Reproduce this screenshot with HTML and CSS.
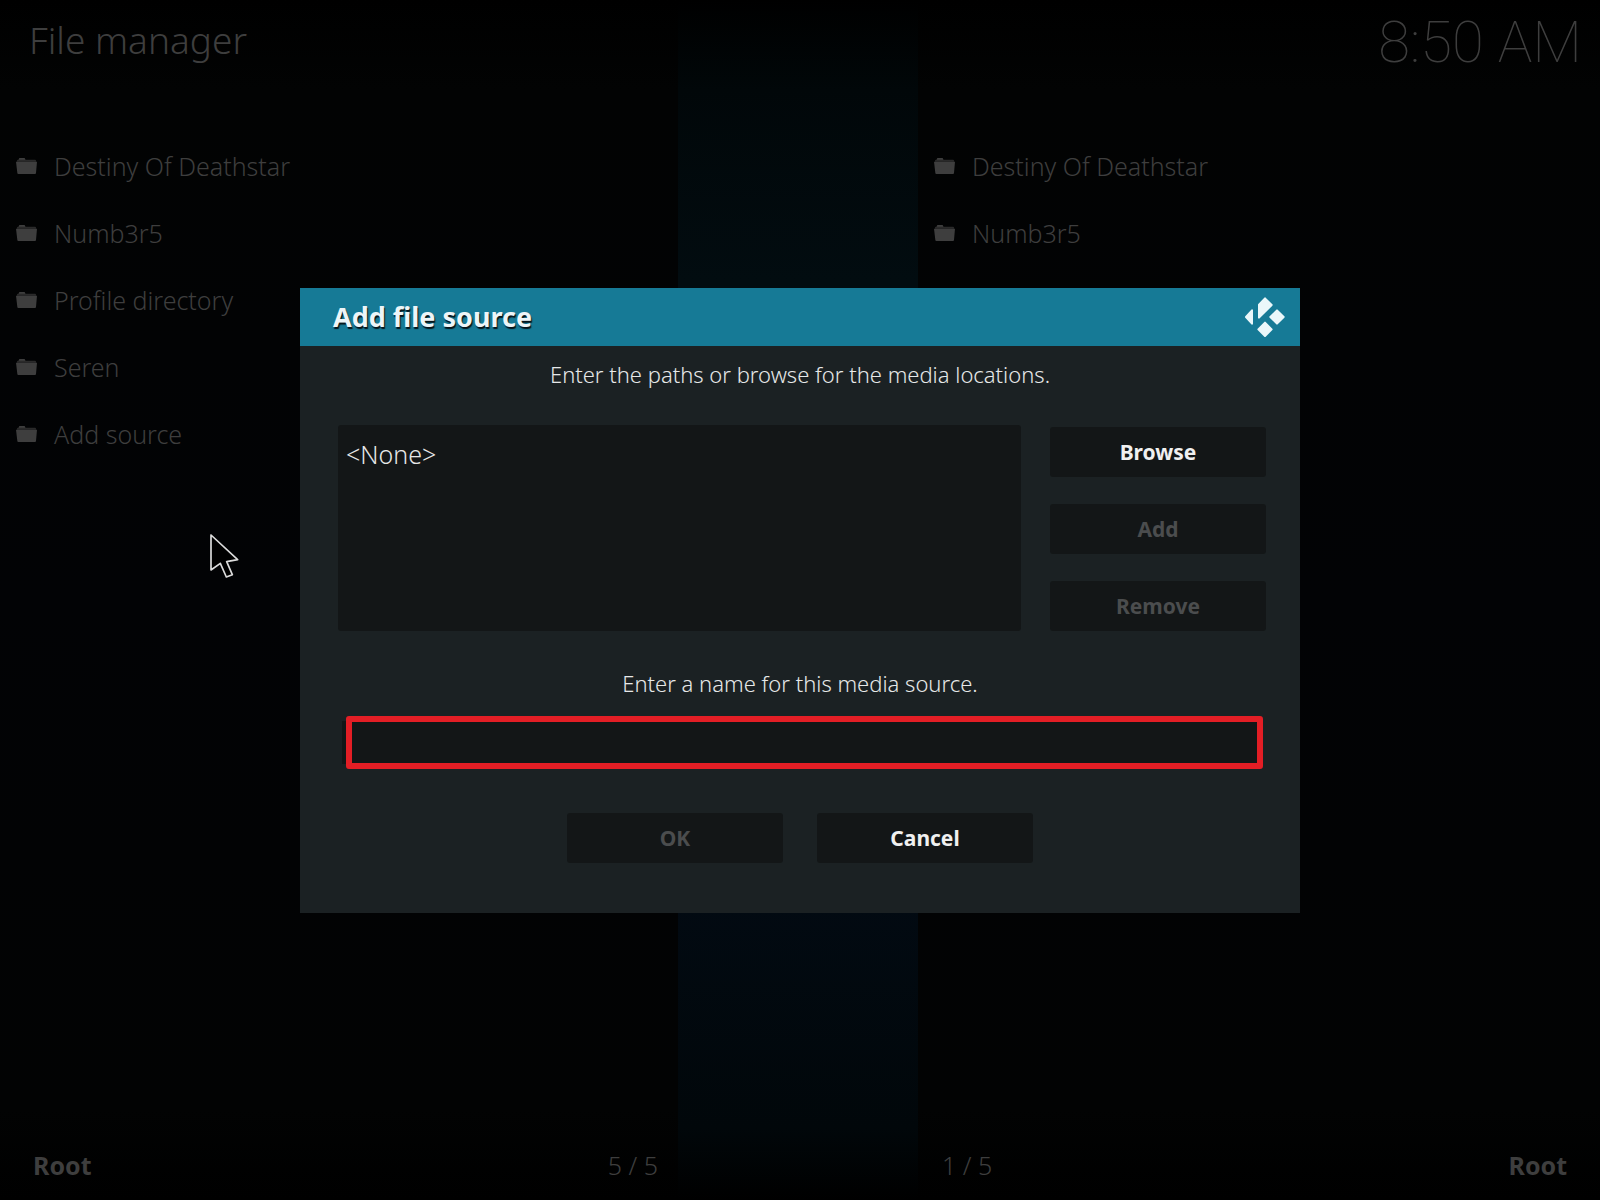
FILE: index.html
```html
<!DOCTYPE html>
<html lang="en">
<head>
<meta charset="UTF-8">
<meta name="viewport" content="width=device-width, initial-scale=1.0">
<title>File manager</title>
<link rel="stylesheet" href="styles.css">
</head>
<body>
<svg class="defs" width="0" height="0" aria-hidden="true">
    <symbol id="folder" viewBox="0 0 63 48">
        <path fill="#2a2a2a" d="M3 11V8q0-3 3-3h2q0-5 4-5h12q4 0 4 5h29q3 0 3 3v3z"/>
        <path fill="#3e3e3e" d="M8 5q0-5 4-5h12q4 0 4 5z"/>
        <path fill="#3e3e3e" d="M0 11h63l-3 34q0 3-3 3H7q-3 0-3-3z"/>
    </symbol>
</svg>

<div class="window">
    <header class="topbar">
        <h1>File manager</h1>
        <time class="clock">8:50 AM</time>
    </header>

    <div class="band"></div>

    <ul class="files files-left">
        <li><a href="#"><svg class="folder"><use href="#folder"/></svg>Destiny Of Deathstar</a></li>
        <li><a href="#"><svg class="folder"><use href="#folder"/></svg>Numb3r5</a></li>
        <li><a href="#"><svg class="folder"><use href="#folder"/></svg>Profile directory</a></li>
        <li><a href="#"><svg class="folder"><use href="#folder"/></svg>Seren</a></li>
        <li><a href="#"><svg class="folder"><use href="#folder"/></svg>Add source</a></li>
    </ul>
    <ul class="files files-right">
        <li><a href="#"><svg class="folder"><use href="#folder"/></svg>Destiny Of Deathstar</a></li>
        <li><a href="#"><svg class="folder"><use href="#folder"/></svg>Numb3r5</a></li>
    </ul>

    <div class="status status-left">
        <strong>Root</strong>
        <span>5 / 5</span>
    </div>
    <div class="status status-right">
        <span>1 / 5</span>
        <strong>Root</strong>
    </div>
</div>

<!-- Add file source dialog -->
<div class="overlay">
    <form class="dialog" role="dialog" aria-labelledby="dialogTitle">
        <div class="dialog-head">
            <h2 id="dialogTitle">Add file source</h2>
            <svg class="logo" viewBox="0 0 120 120" aria-hidden="true">
                <path d="M3 60L21 40V80z"/>
                <path d="M42 23L60 4L80 24L42 62z"/>
                <path d="M76 60L96 40L116 60L96 80z"/>
                <path d="M40 97L60 77L80 97L60 117z"/>
            </svg>
        </div>
        <div class="dialog-body">
            <p class="hint">Enter the paths or browse for the media locations.</p>
            <div class="paths">
                <ul class="path-list">
                    <li>&lt;None&gt;</li>
                </ul>
                <div class="path-actions">
                    <button type="button">Browse</button>
                    <button type="button" disabled>Add</button>
                    <button type="button" disabled>Remove</button>
                </div>
            </div>
            <label class="hint" for="sourceName">Enter a name for this media source.</label>
            <div class="name-field">
                <input type="text" id="sourceName" name="sourceName">
                <span class="highlight"></span>
            </div>
            <div class="dialog-actions">
                <button type="submit" disabled>OK</button>
                <button type="button">Cancel</button>
            </div>
        </div>
    </form>
</div>

<svg class="pointer" viewBox="0 0 84 132" aria-hidden="true">
    <path d="M3 3V108L31 88L49 129L67 122L50 83L83 77z"/>
</svg>
</body>
</html>
```
FILE: styles.css
```css
* {
    box-sizing: border-box;
}

body {
    margin: 0;
    background-color: #020304;
    color: #3e3e3e;
    font-family: "Noto Sans", sans-serif;
    font-size: 25px;
    font-weight: 300;
}

h1, h2, p, ul {
    margin: 0;
    padding: 0;
}

ul {
    list-style: none;
}

.defs {
    position: absolute;
}

/* two panels with the open strip between them */
.window {
    display: grid;
    grid-template-columns: 678fr 240fr 682fr;
    grid-template-rows: 132px 1fr 70px;
    min-height: 100vh;
    background: linear-gradient(#000 0, #020303 90px, #020305 50%, #020303 calc(100% - 90px), #000 100%);
}

.topbar {
    grid-area: 1 / 1 / 2 / 4;
    display: flex;
    justify-content: space-between;
    align-items: flex-start;
    padding: 0 18px 0 29px;
}

.topbar h1 {
    font-size: 37px;
    font-weight: 300;
    line-height: 80px;
}

.clock {
    font-family: Roboto, sans-serif;
    font-size: 58px;
    font-weight: 100;
    line-height: 84px;
}

.band {
    grid-area: 1 / 2 / 4 / 3;
    background: linear-gradient(#000 0, #010709 90px, #020c10 280px, #020a12 75%, #01070a 94%, #000 100%);
}

.files {
    grid-row: 2;
}

.files-left {
    grid-column: 1;
}

.files-right {
    grid-column: 3;
}

.files a {
    display: flex;
    align-items: center;
    gap: 17px;
    height: 67px;
    padding-left: 16px;
    color: inherit;
    text-decoration: none;
}

.folder {
    width: 21px;
    height: 16px;
}

.status {
    grid-row: 3;
    display: flex;
    justify-content: space-between;
    align-items: center;
}

.status strong {
    font-weight: 700;
}

.status-left {
    grid-column: 1;
    padding: 0 20px 0 33px;
}

.status-right {
    grid-column: 3;
    padding: 0 33px 0 24px;
}

.overlay {
    position: fixed;
    inset: 0;
    display: flex;
    align-items: center;
    justify-content: center;
}

.dialog {
    width: 1000px;
    max-width: 100%;
    background-color: #1b2123;
    color: #e6e8e8;
}

.dialog-head {
    display: flex;
    justify-content: space-between;
    align-items: center;
    height: 58px;
    padding: 0 15px 0 33px;
    background-color: #167a96;
}

.dialog-head h2 {
    color: #ecf5f8;
    font-size: 27px;
    font-weight: 700;
    text-shadow: 1px 2px 1px #06151a;
}

.logo {
    width: 40px;
    height: 40px;
    fill: #eaf7fa;
    stroke: #eaf7fa;
    stroke-width: 6;
    stroke-linejoin: round;
}

.dialog-body {
    padding: 12px 34px 50px 38px;
}

.hint {
    display: block;
    padding-right: 4px;
    font-size: 22px;
    line-height: 32px;
    text-align: center;
}

.paths {
    display: flex;
    gap: 29px;
    margin: 35px 0 36px;
}

.path-list {
    flex: 1;
    padding: 12px 8px;
    border-radius: 3px;
    background-color: #131617;
    line-height: 34px;
}

.path-actions {
    display: flex;
    flex-direction: column;
    gap: 27px;
    padding-top: 2px;
}

button {
    width: 216px;
    height: 50px;
    padding: 0;
    border: none;
    border-radius: 3px;
    background-color: #131617;
    color: #f0f0f0;
    font-family: inherit;
    font-size: 21px;
    font-weight: 700;
}

button:disabled {
    color: #4b4d4e;
}

.name-field {
    position: relative;
    margin: 17px 3px 44px 4px;
}

.name-field input {
    display: block;
    width: 100%;
    height: 53px;
    padding: 0 14px;
    border: 5px solid transparent;
    border-width: 5px 0;
    border-radius: 5px;
    outline: none;
    background-color: #131617;
    background-clip: padding-box;
    color: inherit;
    font: inherit;
}

.highlight {
    position: absolute;
    inset: 0 0 0 4px;
    border: 6px solid #e31e25;
    border-radius: 3px;
    pointer-events: none;
}

.dialog-actions {
    display: flex;
    justify-content: center;
    gap: 34px;
    margin-right: 4px;
}

.pointer {
    position: absolute;
    top: 534px;
    left: 210px;
    width: 28px;
    height: 44px;
    fill: #000;
    stroke: #dcdcdc;
    stroke-width: 5;
    stroke-linejoin: round;
    overflow: visible;
}
```
